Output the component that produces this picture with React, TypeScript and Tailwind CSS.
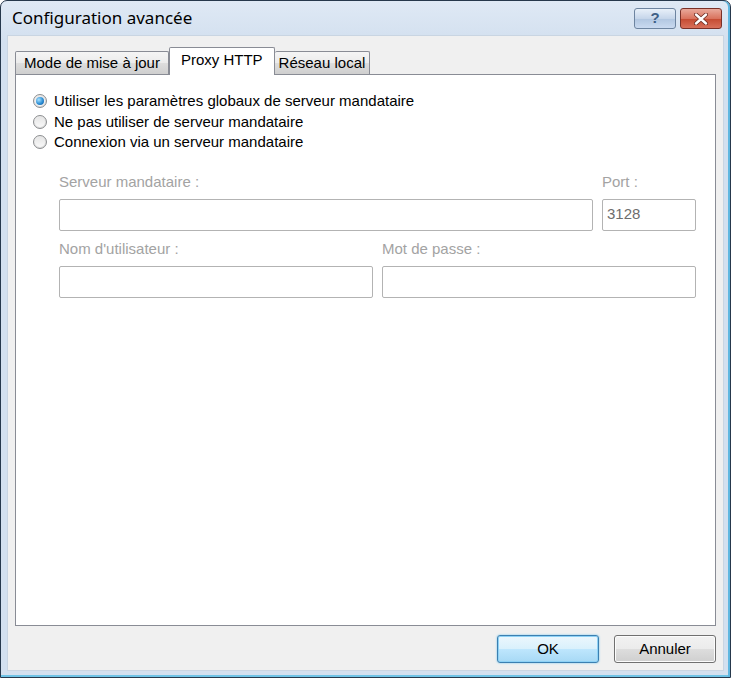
import React from "react";

const dlg = { fontFamily: '"Liberation Sans", Arial, sans-serif' };
const titleFont = { fontFamily: '"Noto Sans", "Open Sans", sans-serif' };

function Radio({ checked, label }: { checked?: boolean; label: string }) {
  return (
    <div className="flex h-[20.5px] items-center gap-[7px]">
      <span className="flex h-[14px] w-[14px] items-center justify-center rounded-full border border-[#8c8e90] bg-[radial-gradient(circle_at_40%_40%,#fdfdfd,#d9d9d9_80%)]">
        <span className="flex h-[10px] w-[10px] items-center justify-center rounded-full bg-[linear-gradient(#e6e6e6,#f8f8f8)]">
          {checked && (
            <span className="h-[8px] w-[8px] rounded-full bg-[radial-gradient(circle_at_35%_35%,#a9e2ff,#2d8fd5_55%,#0b4f96)]" />
          )}
        </span>
      </span>
      <span className="text-[15px] text-black">{label}</span>
    </div>
  );
}

function Field({ label, value }: { label: string; value?: string }) {
  return (
    <div className="flex flex-col">
      <span className="h-[20px] text-[15px] leading-[20px] text-[#a3a3a3]">{label}</span>
      <div className="mt-[7px] h-[32px] rounded-[2px] border border-[#b3b3b3] bg-white px-[4px] pt-[5px] text-[15px] leading-[18px] text-[#6d6d6d]">
        {value}
      </div>
    </div>
  );
}

export default function App() {
  return (
    <div className="h-[678px] w-[731px] bg-white" style={dlg}>
      <div className="flex h-full flex-col rounded-t-[7px] border border-[#26384c] bg-[linear-gradient(#dfe9f5,#d3e0ef_40px,#d3e0ef)] shadow-[inset_-2px_0_0_#5fb7e0,inset_0_-2px_0_#6ec3e6]">
        {/* title bar */}
        <div className="flex h-[34px] items-center pl-[11px] pr-[8px]">
          <span className="text-[17px] text-black" style={titleFont}>
            Configuration avancée
          </span>
          <div className="ml-auto flex gap-[4px] self-start pt-[7px]">
            <div className="flex h-[21px] w-[42px] items-center justify-center rounded-[3px] border border-[#6d84a0] bg-[linear-gradient(#e8f0f9,#c6d6ea_50%,#b1c6e0_51%,#c9daf0)] text-[15px] font-bold text-[#3f5f86]">
              ?
            </div>
            <div className="flex h-[21px] w-[42px] items-center justify-center rounded-[3px] border border-[#7a3128] bg-[linear-gradient(#e9a99b,#d9735e_50%,#c44a31_51%,#d8705a)]">
              <svg width="14" height="12" viewBox="0 0 14 12">
                <path d="M2 1.5 L12 10.5 M12 1.5 L2 10.5" stroke="#6b2a20" strokeWidth="4" strokeLinecap="round" />
                <path d="M2 1.5 L12 10.5 M12 1.5 L2 10.5" stroke="#ffffff" strokeWidth="2.4" strokeLinecap="round" />
              </svg>
            </div>
          </div>
        </div>

        {/* client area */}
        <div className="mx-[6px] mb-[6px] flex flex-1 flex-col border border-[#c9d5e2] bg-[#f0f0f0] px-[7px] pt-[11px]">
          {/* tabs */}
          <div className="flex h-[27px] items-end">
            <div className="flex h-[23px] items-center rounded-t-[2px] border border-b-0 border-[#898c95] bg-[linear-gradient(#f5f5f5,#ebebeb_50%,#dddddd_51%,#cfcfcf)] px-[8px] text-[15px]">
              Mode de mise à jour
            </div>
            <div className="relative z-10 -mb-px flex h-[28px] items-center rounded-t-[2px] border border-b-0 border-[#898c95] bg-white px-[11px] pb-[3px] text-[15px]">
              Proxy HTTP
            </div>
            <div className="flex h-[23px] items-center rounded-t-[2px] border border-b-0 border-l-0 border-[#898c95] bg-[linear-gradient(#f5f5f5,#ebebeb_50%,#dddddd_51%,#cfcfcf)] px-[4px] text-[15px]">
              Réseau local
            </div>
          </div>

          {/* panel */}
          <div className="h-[552px] border border-[#898c95] bg-white pl-[17px] pr-[19px] pt-[16px]">
            <Radio checked label="Utiliser les paramètres globaux de serveur mandataire" />
            <Radio label="Ne pas utiliser de serveur mandataire" />
            <Radio label="Connexion via un serveur mandataire" />

            <div className="ml-[26px] mt-[19px] flex flex-col gap-[8px]">
              <div className="grid grid-cols-[1fr_94px] gap-x-[9px]">
                <Field label="Serveur mandataire :" />
                <Field label="Port :" value="3128" />
              </div>
              <div className="grid grid-cols-2 gap-x-[9px]">
                <Field label="Nom d'utilisateur :" />
                <Field label="Mot de passe :" />
              </div>
            </div>
          </div>

          {/* buttons */}
          <div className="mt-[9px] flex justify-end gap-[15px]">
            <button className="h-[28px] w-[102px] rounded-[3px] border border-[#3c7fb1] bg-[linear-gradient(#ecf7fd,#d9f0fc_50%,#bee6fd_51%,#a7d9f5)] text-[15px] shadow-[inset_0_0_0_1px_#8ed2f6,0_0_2px_#5fc3ee]">
              OK
            </button>
            <button className="h-[28px] w-[102px] rounded-[3px] border border-[#707070] bg-[linear-gradient(#f2f2f2,#ebebeb_50%,#dddddd_51%,#cfcfcf)] text-[15px] shadow-[inset_0_0_0_1px_#fcfcfc]">
              Annuler
            </button>
          </div>
        </div>
      </div>
    </div>
  );
}
